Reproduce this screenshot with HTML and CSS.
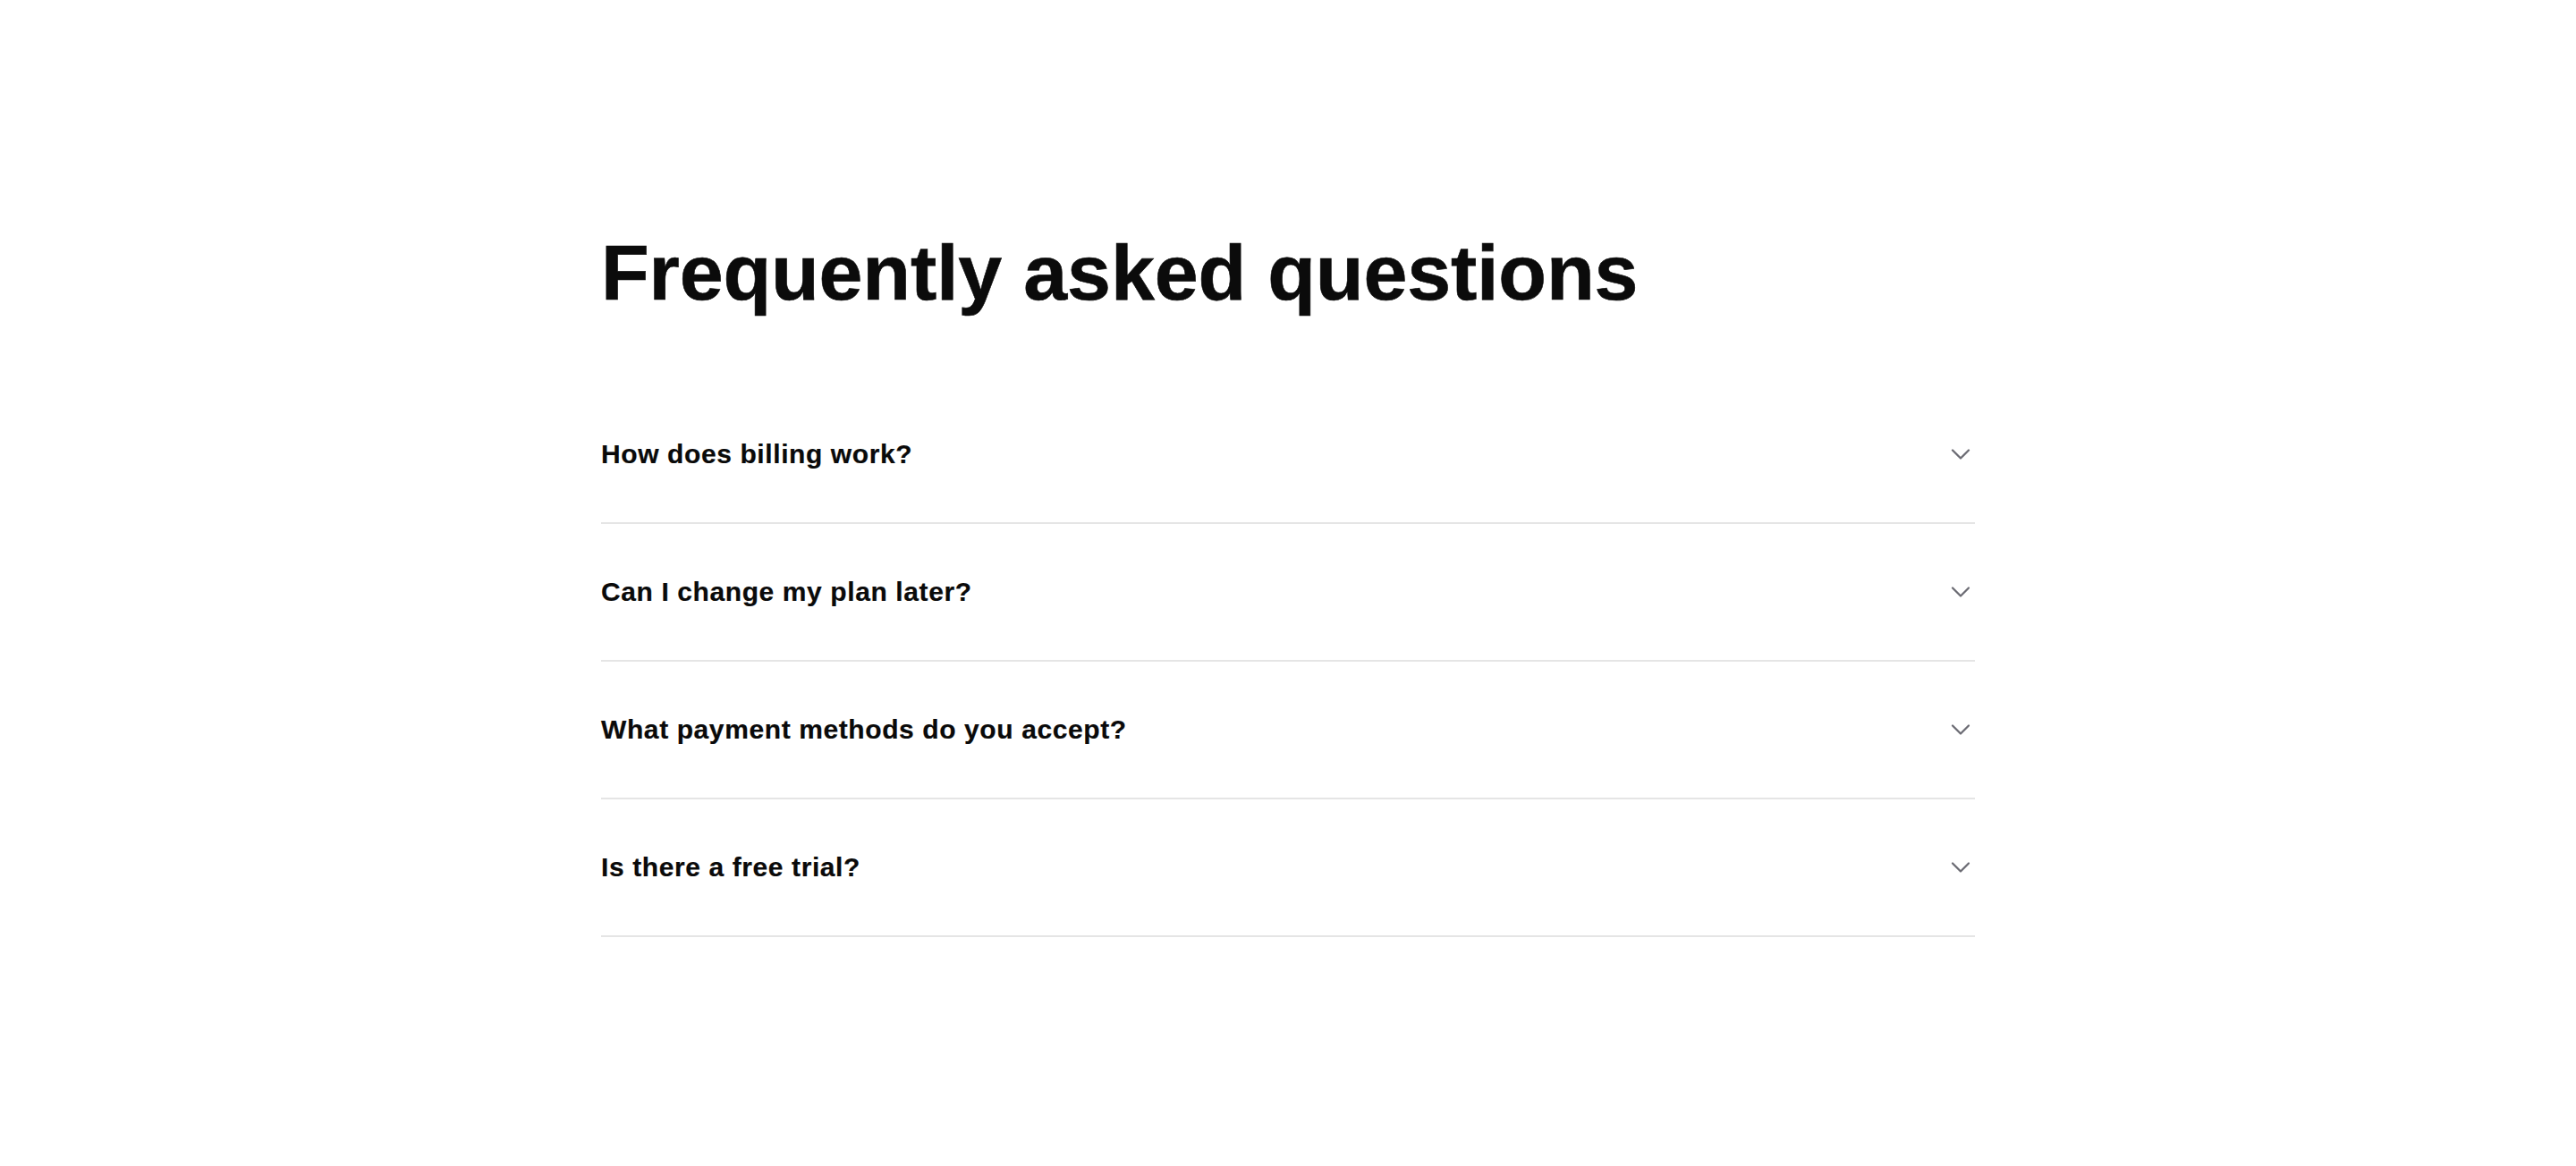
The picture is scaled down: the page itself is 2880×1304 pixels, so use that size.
FILE: index.html
```html
<!DOCTYPE html>
<html lang="en">
<head>
<meta charset="utf-8">
<title>FAQ</title>
<link rel="stylesheet" href="styles.css">
</head>
<body>
<section class="faq">
  <h1 class="faq-title">Frequently asked questions</h1>
  <div class="faq-list">
    <button class="faq-item" type="button">
      <span class="faq-q">How does billing work?</span>
      <svg class="chev" viewBox="0 0 24 24" width="36" height="36" fill="none" stroke="currentColor" stroke-width="1.5" stroke-linecap="round" stroke-linejoin="round"><path d="m6 9 6 6 6-6"/></svg>
    </button>
    <button class="faq-item" type="button">
      <span class="faq-q">Can I change my plan later?</span>
      <svg class="chev" viewBox="0 0 24 24" width="36" height="36" fill="none" stroke="currentColor" stroke-width="1.5" stroke-linecap="round" stroke-linejoin="round"><path d="m6 9 6 6 6-6"/></svg>
    </button>
    <button class="faq-item" type="button">
      <span class="faq-q">What payment methods do you accept?</span>
      <svg class="chev" viewBox="0 0 24 24" width="36" height="36" fill="none" stroke="currentColor" stroke-width="1.5" stroke-linecap="round" stroke-linejoin="round"><path d="m6 9 6 6 6-6"/></svg>
    </button>
    <button class="faq-item" type="button">
      <span class="faq-q">Is there a free trial?</span>
      <svg class="chev" viewBox="0 0 24 24" width="36" height="36" fill="none" stroke="currentColor" stroke-width="1.5" stroke-linecap="round" stroke-linejoin="round"><path d="m6 9 6 6 6-6"/></svg>
    </button>
  </div>
</section>
</body>
</html>
```

FILE: styles.css
```css
* { box-sizing: border-box; }
html, body { margin: 0; padding: 0; background: #ffffff; }
body {
  font-family: "Liberation Sans", Arial, Helvetica, sans-serif;
  color: #0a0a0a;
}
.faq {
  width: 1536px;
  margin: 0 auto;
  padding-top: 257px;
}
.faq-title {
  margin: 0;
  font-size: 88px;
  line-height: 1.1;
  font-weight: 700;
  letter-spacing: -0.002em;
  color: #0b0b0b;
  -webkit-text-stroke: 0.6px #0b0b0b;
}
.faq-list {
  margin-top: 78px;
  display: flex;
  flex-direction: column;
}
.faq-item {
  display: flex;
  align-items: center;
  justify-content: space-between;
  width: 100%;
  padding: 55px 0;
  background: none;
  border: 0;
  border-bottom: 2px solid #e5e5e5;
  font: inherit;
  color: inherit;
  text-align: left;
  cursor: pointer;
}
.faq-q {
  font-size: 30px;
  line-height: 42px;
  font-weight: 700;
  letter-spacing: 0.02em;
  color: #0a0a0a;
  -webkit-text-stroke: 0.2px #0a0a0a;
}
.chev {
  flex: none;
  color: #6b6b73;
  margin-right: -2px;
}
```
